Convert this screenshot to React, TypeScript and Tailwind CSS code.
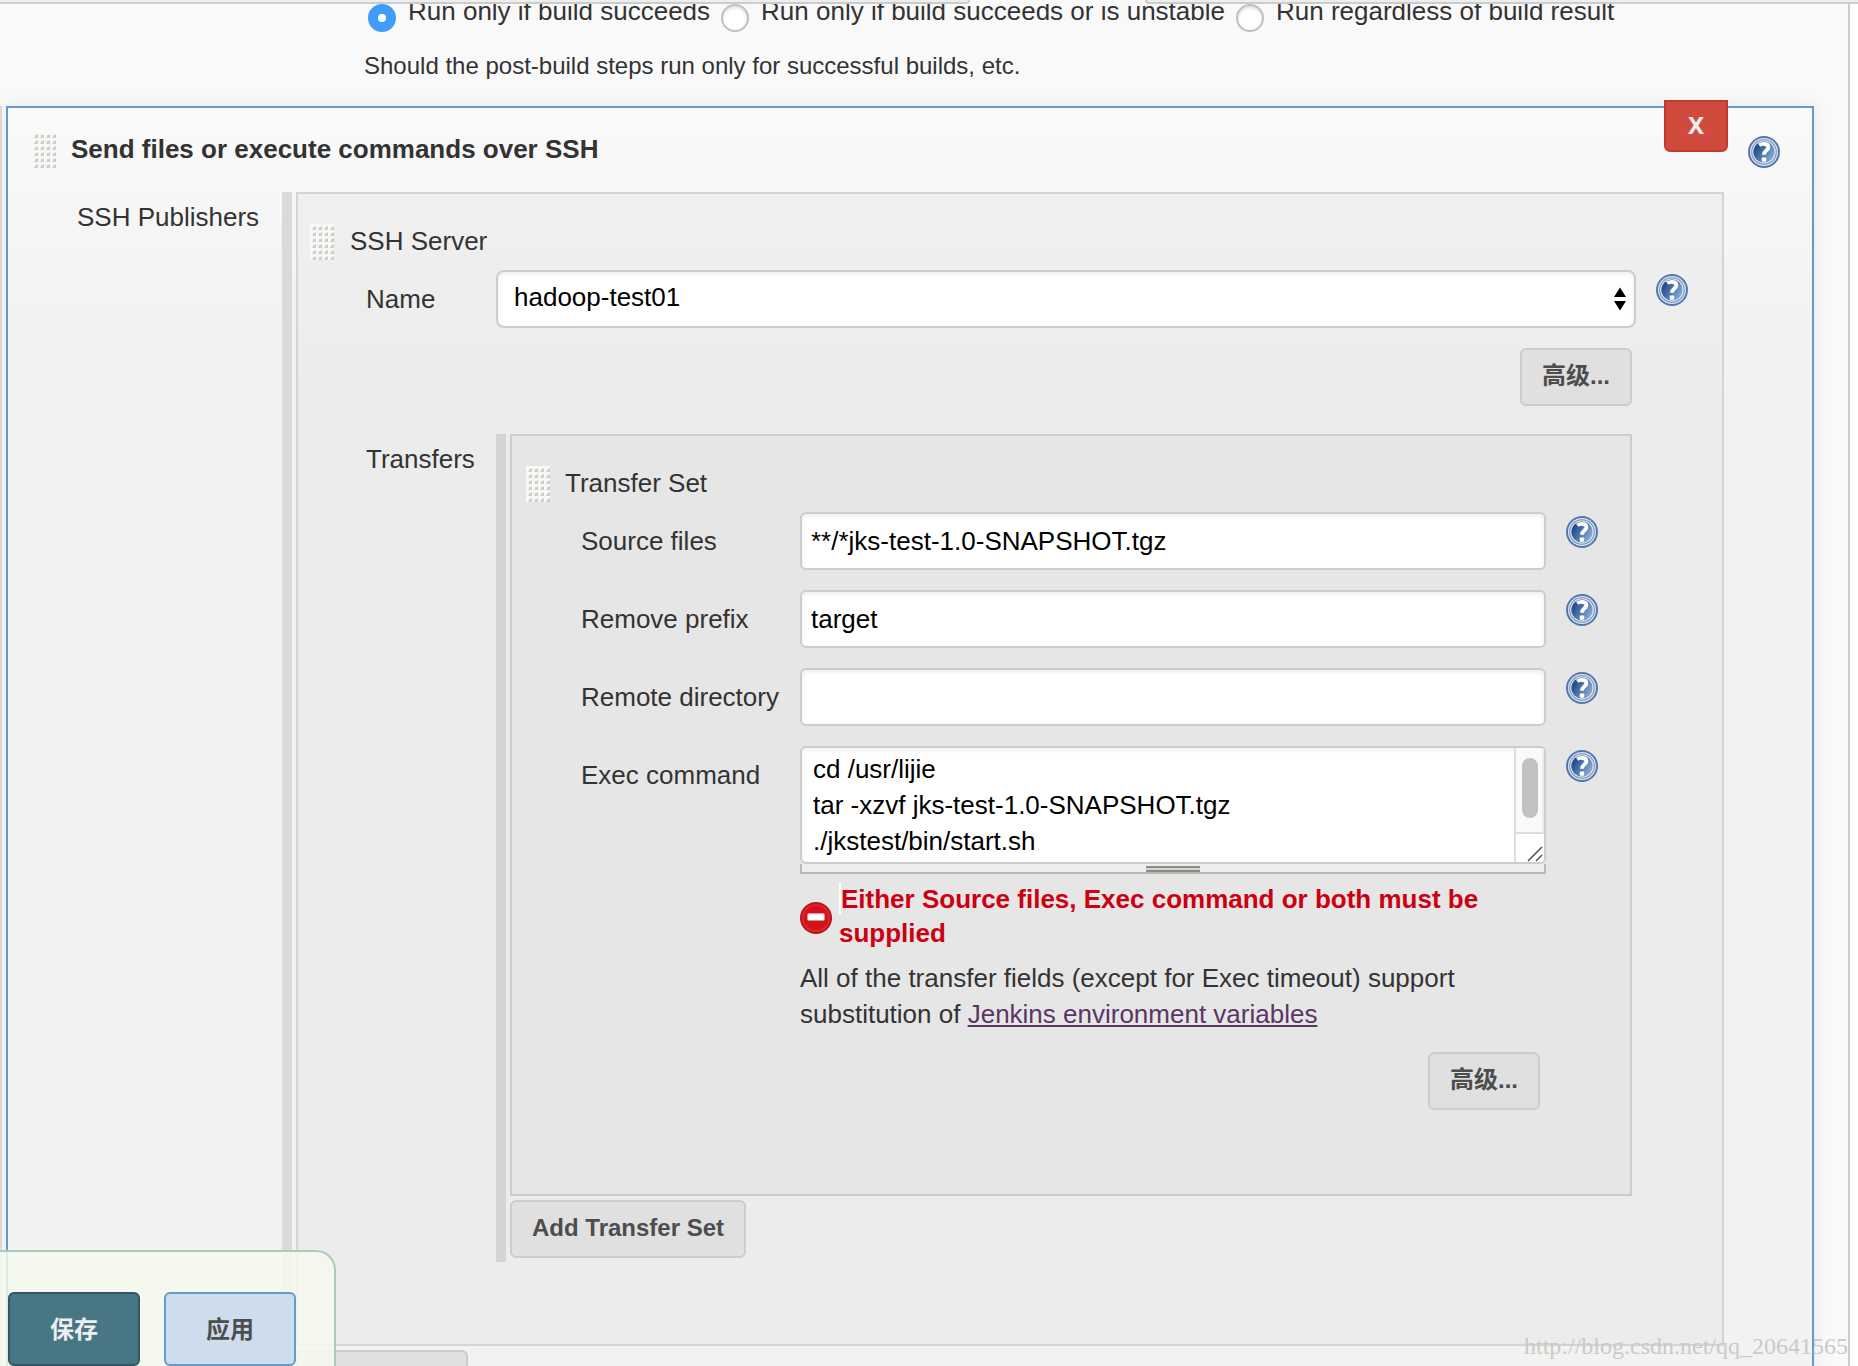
import type { ReactNode } from "react";

const DOT_COLUMNS = [0, 1, 2, 3];
const DOT_ROWS = [0, 1, 2, 3, 4, 5];

function DragHandle() {
  return (
    <svg className="h-9 w-6 shrink-0 cursor-move" viewBox="0 0 24 36" aria-hidden="true">
      <rect width="24" height="36" fill="#f8f8f7" />
      {DOT_ROWS.map((row) =>
        DOT_COLUMNS.map((col) => (
          <g key={`${row}-${col}`}>
            <path d={`M${col * 6 + 2} ${row * 6 + 6}h4v-4z`} fill="#c0c0bb" />
            <rect x={col * 6 + 3} y={row * 6 + 3} width="3" height="3" fill="#cfcfca" />
          </g>
        )),
      )}
    </svg>
  );
}

function HelpButton({ label }: { label: string }) {
  return (
    <button type="button" aria-label={`Help for ${label}`} className="mt-1 size-8 shrink-0">
      <svg viewBox="0 0 32 32" className="size-8">
        <defs>
          <linearGradient id="help-fill" x1="0" y1="0.2" x2="1" y2="0.8">
            <stop offset="0.1" stopColor="#204a87" />
            <stop offset="1" stopColor="#8fb3dc" />
          </linearGradient>
        </defs>
        <circle cx="16" cy="16" r="16" fill="#5478ab" />
        <circle cx="16" cy="16" r="14" fill="#dbe4f0" />
        <circle cx="16" cy="16" r="12.8" fill="#6f8fbd" />
        <circle cx="16" cy="16" r="11.8" fill="#dbe4f0" />
        <circle cx="16" cy="16" r="10.6" fill="url(#help-fill)" />
        <path
          d="M11.2 9.2c2.4-1.8 9.2-2.1 9.2 2 0 3.2-4.4 3-4.4 7.6"
          fill="none"
          stroke="#fff"
          strokeWidth="3.8"
        />
        <rect x="13.8" y="21.4" width="4.4" height="4.4" rx="0.8" fill="#fff" />
      </svg>
    </button>
  );
}

function GrayButton({ children }: { children: ReactNode }) {
  return (
    <button
      type="button"
      className="h-[58px] rounded-md border-2 border-[#cccccc] bg-[#e0e0e0] px-5 pb-0.5 text-2xl font-bold text-[#4d4d4d]"
    >
      {children}
    </button>
  );
}

function TextRow({ id, label, value }: { id: string; label: string; value: string }) {
  return (
    <div className="flex items-start">
      <label htmlFor={id} className="w-[219px] shrink-0 pt-[11px]">
        {label}
      </label>
      <input
        id={id}
        type="text"
        defaultValue={value}
        className="h-[58px] min-w-0 flex-1 rounded-md border-2 border-[#cccccc] bg-white px-[9px] text-black shadow-[inset_0_2px_4px_rgba(0,0,0,0.08)] outline-none"
      />
      <div className="ml-5">
        <HelpButton label={label} />
      </div>
    </div>
  );
}

function RadioOption({ label, checked }: { label: string; checked?: boolean }) {
  return (
    <label className="flex items-end gap-3">
      <input
        type="radio"
        name="post-steps"
        defaultChecked={checked}
        className="size-7 shrink-0 appearance-none rounded-full border-2 border-[#c0c0c0] bg-white shadow-[inset_0_2px_3px_rgba(0,0,0,0.12)] checked:border-10 checked:border-[#419bf9] checked:shadow-none"
      />
      <span className="mb-[3px] whitespace-nowrap">{label}</span>
    </label>
  );
}

function ExecCommand() {
  return (
    <div className="min-w-0 flex-1">
      <div className="relative">
        <textarea
          id="exec-command"
          rows={3}
          defaultValue={"cd /usr/lijie\ntar -xzvf jks-test-1.0-SNAPSHOT.tgz\n./jkstest/bin/start.sh"}
          className="block h-[118px] w-full resize-none overflow-hidden rounded-md border-2 border-[#cccccc] bg-white py-[3px] pr-10 pl-[11px] text-black shadow-[inset_0_2px_4px_rgba(0,0,0,0.08)] outline-none"
        />
        <div className="absolute inset-y-0.5 right-0.5 flex w-[30px] flex-col overflow-hidden rounded-r border-l-2 border-[#dddddd] bg-white">
          <div className="flex-1 border-r-2 border-b-2 border-[#dddddd] border-r-[#ececec] bg-[#fafafa] pt-2.5 pl-1.5">
            <div className="h-[60px] w-4 rounded-full bg-[#c1c1c1]" />
          </div>
          <svg className="h-7 w-7" viewBox="0 0 28 28" aria-hidden="true">
            <path d="M12 27L26 13M20 27l6-6" stroke="#555" strokeWidth="1.6" />
          </svg>
        </div>
      </div>
      <div className="flex h-2.5 justify-center border-x-2 border-b-2 border-[#babab4] bg-[#eeeeee] pt-0.5">
        <div className="h-1.5 w-[54px] border-y-2 border-[#8a8c86] bg-[#d3d5cf]" />
      </div>
      <div className="mt-2 flex items-start gap-[7px] font-bold text-[#cc0011]">
        <svg className="mt-5 size-8 shrink-0" viewBox="0 0 32 32" aria-hidden="true">
          <circle cx="16" cy="16" r="16" fill="#b8141a" />
          <circle cx="16" cy="16" r="14" fill="#de2a2e" />
          <circle cx="16" cy="16" r="12.5" fill="#d4121a" />
          <rect x="7.5" y="11.5" width="17" height="7" rx="1" fill="#fff" />
        </svg>
        <p className="leading-[34px]">
          <span className="inline-block h-8 w-0.5 bg-white align-top" />
          Either Source files, Exec command or both must be supplied
        </p>
      </div>
      <p className="mt-2.5">
        All of the transfer fields (except for Exec timeout) support substitution of{" "}
        <a href="#env" className="text-[#5c3566] underline decoration-2 underline-offset-2">
          Jenkins environment variables
        </a>
      </p>
    </div>
  );
}

function TransferSet() {
  return (
    <div className="border-2 border-[#cccccc] bg-[#e6e6e6] pt-[30px] pr-8 pb-[84px] pl-3.5">
      <div className="flex h-9 gap-[15px]">
        <DragHandle />
        <span className="leading-[34px]">Transfer Set</span>
      </div>
      <div className="mt-2.5 flex flex-col gap-5 pl-[55px]">
        <TextRow id="source-files" label="Source files" value="**/*jks-test-1.0-SNAPSHOT.tgz" />
        <TextRow id="remove-prefix" label="Remove prefix" value="target" />
        <TextRow id="remote-directory" label="Remote directory" value="" />
        <div className="flex items-start">
          <label htmlFor="exec-command" className="w-[219px] shrink-0 pt-[11px]">
            Exec command
          </label>
          <ExecCommand />
          <div className="ml-5">
            <HelpButton label="Exec command" />
          </div>
        </div>
      </div>
      <div className="mt-5 flex justify-end pr-[58px]">
        <GrayButton>高级...</GrayButton>
      </div>
    </div>
  );
}

function SshServer() {
  return (
    <div className="border-2 border-[#d4d4d4] bg-[#ececec] bg-linear-to-b from-[#f0f0f0] to-[#ececec] to-[200px] pt-[30px] pb-[82px] pl-3">
      <div className="flex h-9 gap-4">
        <DragHandle />
        <span className="leading-[34px]">SSH Server</span>
      </div>
      <div className="mt-2.5 flex items-start pr-[34px] pl-14">
        <label htmlFor="server-name" className="w-[130px] shrink-0 pt-[11px]">
          Name
        </label>
        <div className="relative min-w-0 flex-1">
          <select
            id="server-name"
            className="h-[58px] w-full appearance-none rounded-lg border-2 border-[#cccccc] bg-white px-4 pb-1 text-black shadow-[inset_0_2px_4px_rgba(0,0,0,0.08)] outline-none"
          >
            <option>hadoop-test01</option>
          </select>
          <svg
            className="pointer-events-none absolute top-[17px] right-2.5 h-6 w-3"
            viewBox="0 0 12 24"
            aria-hidden="true"
          >
            <path d="M6 0.5l6 9.5H0zM6 23.5L0 14h12z" />
          </svg>
        </div>
        <div className="ml-5">
          <HelpButton label="Name" />
        </div>
      </div>
      <div className="mt-5 flex justify-end pr-[90px]">
        <GrayButton>高级...</GrayButton>
      </div>
      <div className="mt-7 flex pr-[90px] pl-14">
        <span className="w-[130px] shrink-0 pt-[7px]">Transfers</span>
        <div className="min-w-0 flex-1 border-l-10 border-[#d4d4d4] pb-1 pl-1">
          <TransferSet />
          <div className="mt-1 flex">
            <GrayButton>Add Transfer Set</GrayButton>
          </div>
        </div>
      </div>
    </div>
  );
}

export default function App() {
  return (
    <div className="relative h-screen overflow-hidden bg-white pr-2 font-['Liberation_Sans','Noto_Sans_CJK_SC',sans-serif] text-[26px] leading-9 text-[#333333]">
      <div className="flex h-full flex-col border-r-2 border-[#cccccc] bg-[#f9f9f9]">
        <div className="absolute inset-x-0 top-0 z-10 flex h-1 justify-between bg-[#f9f9f9]">
          <div className="w-[52.2%] rounded-br border-r-2 border-b-2 border-[#cccccc] bg-[#eeeeee]" />
          <div className="w-[38.4%] rounded-bl border-b-2 border-l-2 border-[#cccccc] bg-[#eeeeee]" />
        </div>

        <div className="pl-[364px]">
          <div className="flex h-8 items-end gap-[11px] pl-1">
            <RadioOption label="Run only if build succeeds" checked />
            <RadioOption label="Run only if build succeeds or is unstable" />
            <RadioOption label="Run regardless of build result" />
          </div>
          <p className="mt-4 pt-px text-2xl leading-[33px]">
            Should the post-build steps run only for successful builds, etc.
          </p>
        </div>

        <div className="mt-6 flex-1 border-l-2 border-[#dddddd] pr-[34px] pl-1">
          <section className="relative border-2 border-[#6699cc] bg-[#f2f2f2] bg-linear-to-b from-[#fafafa] to-[#f2f2f2] to-[220px] pb-10 shadow-[0_0_16px_rgba(0,0,0,0.08)]">
            <button
              type="button"
              aria-label="Delete"
              className="absolute -top-2 right-[84px] h-[52px] w-16 rounded-b-md border-2 border-[#c4392d] bg-[#d04a3e] pb-0.5 font-['Noto_Sans',sans-serif] text-2xl font-bold text-[#eeeeee]"
            >
              X
            </button>
            <div className="flex h-[84px] items-start gap-[15px] pt-6 pr-8 pl-6">
              <DragHandle />
              <h2 className="flex-1 leading-[34px] font-bold">
                Send files or execute commands over SSH
              </h2>
              <HelpButton label="Send files or execute commands over SSH" />
            </div>
            <div className="flex pr-[88px]">
              <span className="w-[274px] shrink-0 pt-[7px] pl-[69px]">SSH Publishers</span>
              <div className="min-w-0 flex-1 border-l-10 border-[#dadada] pl-1">
                <SshServer />
                <div className="mt-1 flex">
                  <button
                    type="button"
                    aria-label="Add Server"
                    className="h-[58px] w-[172px] rounded-md border-2 border-[#cccccc] bg-[#e0e0e0]"
                  />
                </div>
              </div>
            </div>
          </section>
        </div>
      </div>

      <div className="absolute bottom-0 left-0 z-10 flex gap-6 rounded-tr-[20px] border-t-2 border-r-2 border-[#a9cbb7] bg-[#f5f9ef]/85 pt-10 pr-[38px] pl-2">
        <button
          type="button"
          className="h-[74px] w-[132px] rounded-md border-2 border-[#335566] bg-[#477785] pt-0.5 text-2xl font-bold text-[#eeeeee]"
        >
          保存
        </button>
        <button
          type="button"
          className="h-[74px] w-[132px] rounded-md border-2 border-[#6699cc] bg-[#cdddee] pt-0.5 text-2xl font-bold text-[#4d4d4d]"
        >
          应用
        </button>
      </div>

      <span className="absolute right-2.5 bottom-0.5 font-['Liberation_Serif',serif] text-2xl leading-9 text-[#cacac6]">
        http://blog.csdn.net/qq_20641565
      </span>
    </div>
  );
}
